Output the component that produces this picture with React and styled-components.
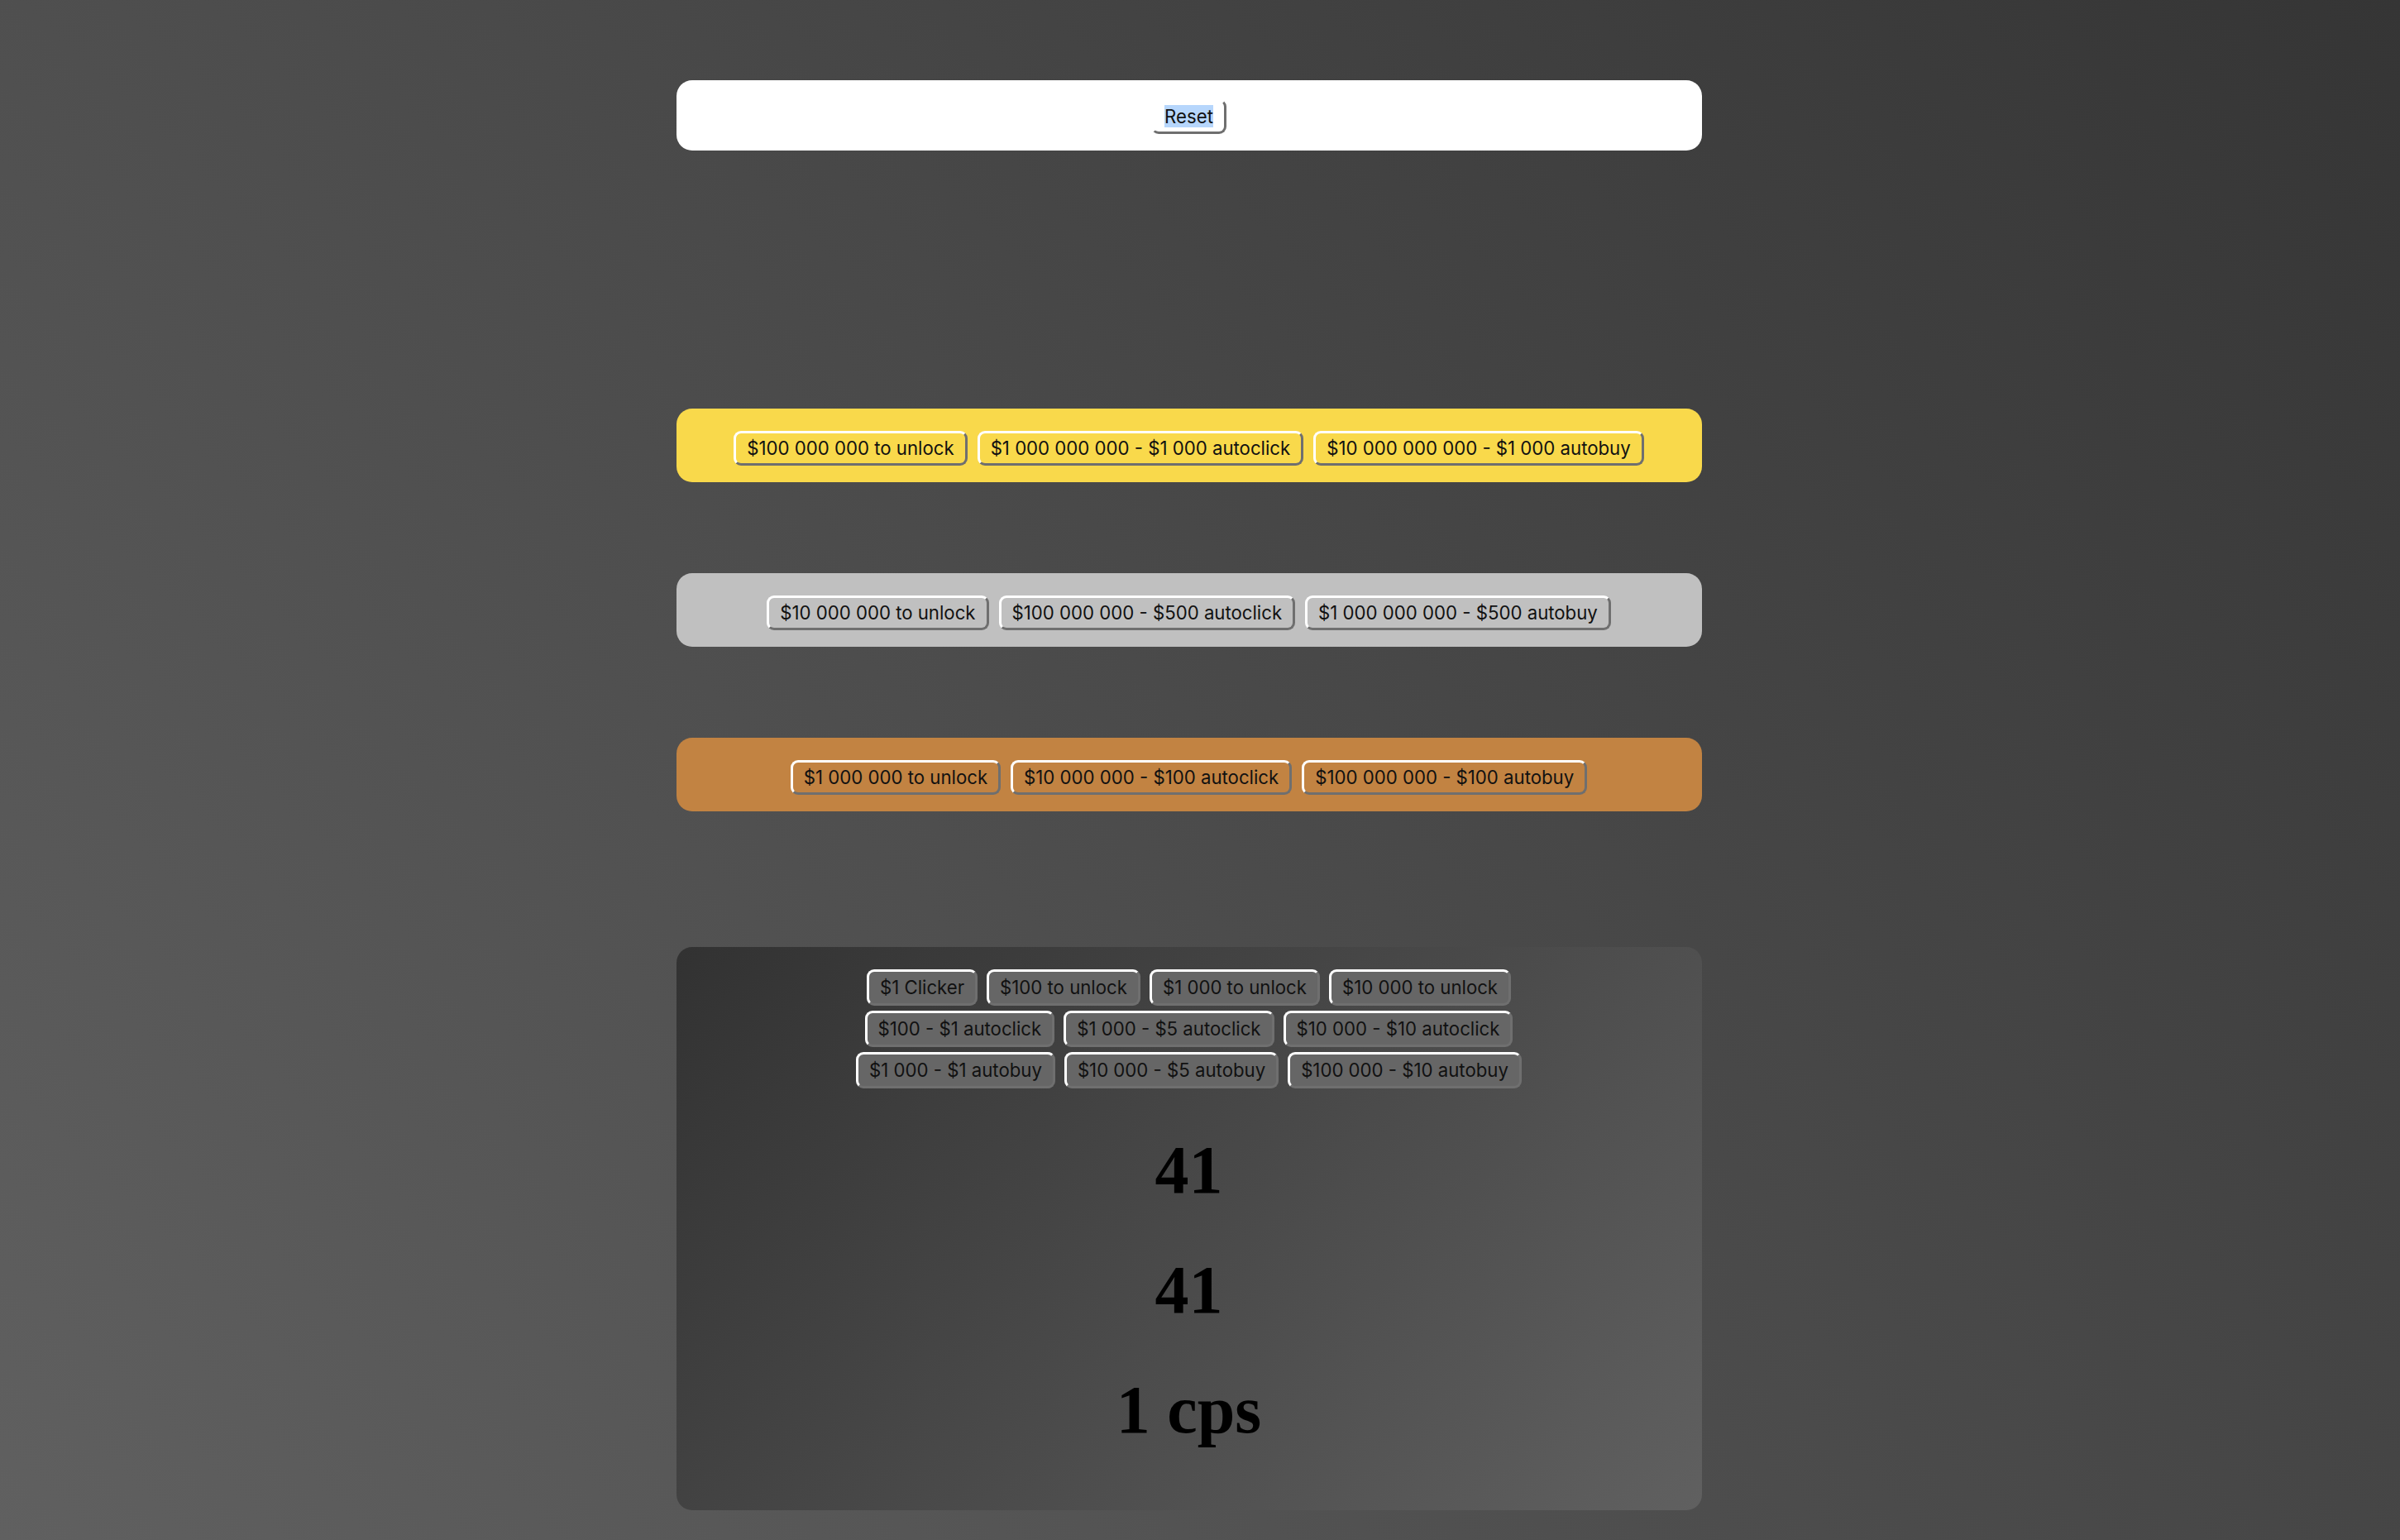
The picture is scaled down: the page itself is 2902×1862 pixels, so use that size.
import React from 'react';
import styled, { createGlobalStyle } from 'styled-components';

const GlobalStyle = createGlobalStyle`
  html, body {
    margin: 0;
    padding: 0;
  }
  body {
    font-family: Inter, "Liberation Sans", sans-serif;
  }
`;

const Tones = {
  white: '#ffffff',
  gold: '#f9d94b',
  silver: '#c0c0c0',
  bronze: '#c28342',
  dark: 'linear-gradient(135deg, #323232 0%, #606060 100%)',
};

const Page = styled.main`
  box-sizing: border-box;
  min-height: 100vh;
  padding: 97px 27px 0 0;
  display: flex;
  flex-direction: column;
  align-items: center;
  background: linear-gradient(225deg, #353535 0%, #606060 100%);
`;

const Panel = styled.section`
  box-sizing: border-box;
  width: 1240px;
  margin-top: ${(p) => p.$offset || 0}px;
  padding: ${(p) => (p.$tone === 'white' ? '23px 16px 20px' : '27px 16px 20px')};
  border-radius: 19px;
  background: ${(p) => Tones[p.$tone]};
  display: flex;
  flex-direction: column;
  align-items: center;
`;

const DarkPanel = styled(Panel)`
  padding: 27px 16px 73px;
`;

const ButtonRow = styled.div`
  display: flex;
  justify-content: center;
  gap: ${(p) => (p.$tight ? 11 : 12)}px;
`;

const RowStack = styled.div`
  display: flex;
  flex-direction: column;
  gap: 6px;
`;

const ShopButton = styled.button`
  box-sizing: border-box;
  height: ${(p) => (p.$filled ? 44 : 42)}px;
  padding: 0 13px;
  font-family: Inter, "Liberation Sans", sans-serif;
  font-size: 22.2px;
  line-height: 28px;
  color: #111111;
  background: ${(p) => (p.$filled ? '#666666' : 'transparent')};
  border: 3px solid;
  border-color: #ffffff #6f6f6f #6f6f6f #ffffff;
  border-radius: 9px;
  white-space: nowrap;
  cursor: pointer;
`;

const Selected = styled.span`
  background: #b6d6fc;
`;

const CounterStack = styled.div`
  margin-top: 51px;
  display: flex;
  flex-direction: column;
  align-items: center;
  gap: 49px;
`;

const Counter = styled.h1`
  margin: 0;
  font-family: "Liberation Serif", "Times New Roman", serif;
  font-weight: bold;
  font-size: 82px;
  line-height: 96px;
  color: #000000;
`;

const tiers = [
  {
    tone: 'gold',
    offset: 312,
    items: [
      '$100 000 000 to unlock',
      '$1 000 000 000 - $1 000 autoclick',
      '$10 000 000 000 - $1 000 autobuy',
    ],
  },
  {
    tone: 'silver',
    offset: 110,
    items: [
      '$10 000 000 to unlock',
      '$100 000 000 - $500 autoclick',
      '$1 000 000 000 - $500 autobuy',
    ],
  },
  {
    tone: 'bronze',
    offset: 110,
    items: [
      '$1 000 000 to unlock',
      '$10 000 000 - $100 autoclick',
      '$100 000 000 - $100 autobuy',
    ],
  },
];

const baseRows = [
  ['$1 Clicker', '$100 to unlock', '$1 000 to unlock', '$10 000 to unlock'],
  ['$100 - $1 autoclick', '$1 000 - $5 autoclick', '$10 000 - $10 autoclick'],
  ['$1 000 - $1 autobuy', '$10 000 - $5 autobuy', '$100 000 - $10 autobuy'],
];

export default function App() {
  return (
    <>
      <GlobalStyle />
      <Page>
        <Panel $tone="white">
          <ShopButton>
            <Selected>Reset</Selected>
          </ShopButton>
        </Panel>

        {tiers.map((tier) => (
          <Panel key={tier.tone} $tone={tier.tone} $offset={tier.offset}>
            <ButtonRow>
              {tier.items.map((label) => (
                <ShopButton key={label}>{label}</ShopButton>
              ))}
            </ButtonRow>
          </Panel>
        ))}

        <DarkPanel $tone="dark" $offset={164}>
          <RowStack>
            {baseRows.map((row, i) => (
              <ButtonRow key={i} $tight>
                {row.map((label) => (
                  <ShopButton key={label} $filled>
                    {label}
                  </ShopButton>
                ))}
              </ButtonRow>
            ))}
          </RowStack>
          <CounterStack>
            <Counter>41</Counter>
            <Counter>41</Counter>
            <Counter>1 cps</Counter>
          </CounterStack>
        </DarkPanel>
      </Page>
    </>
  );
}
